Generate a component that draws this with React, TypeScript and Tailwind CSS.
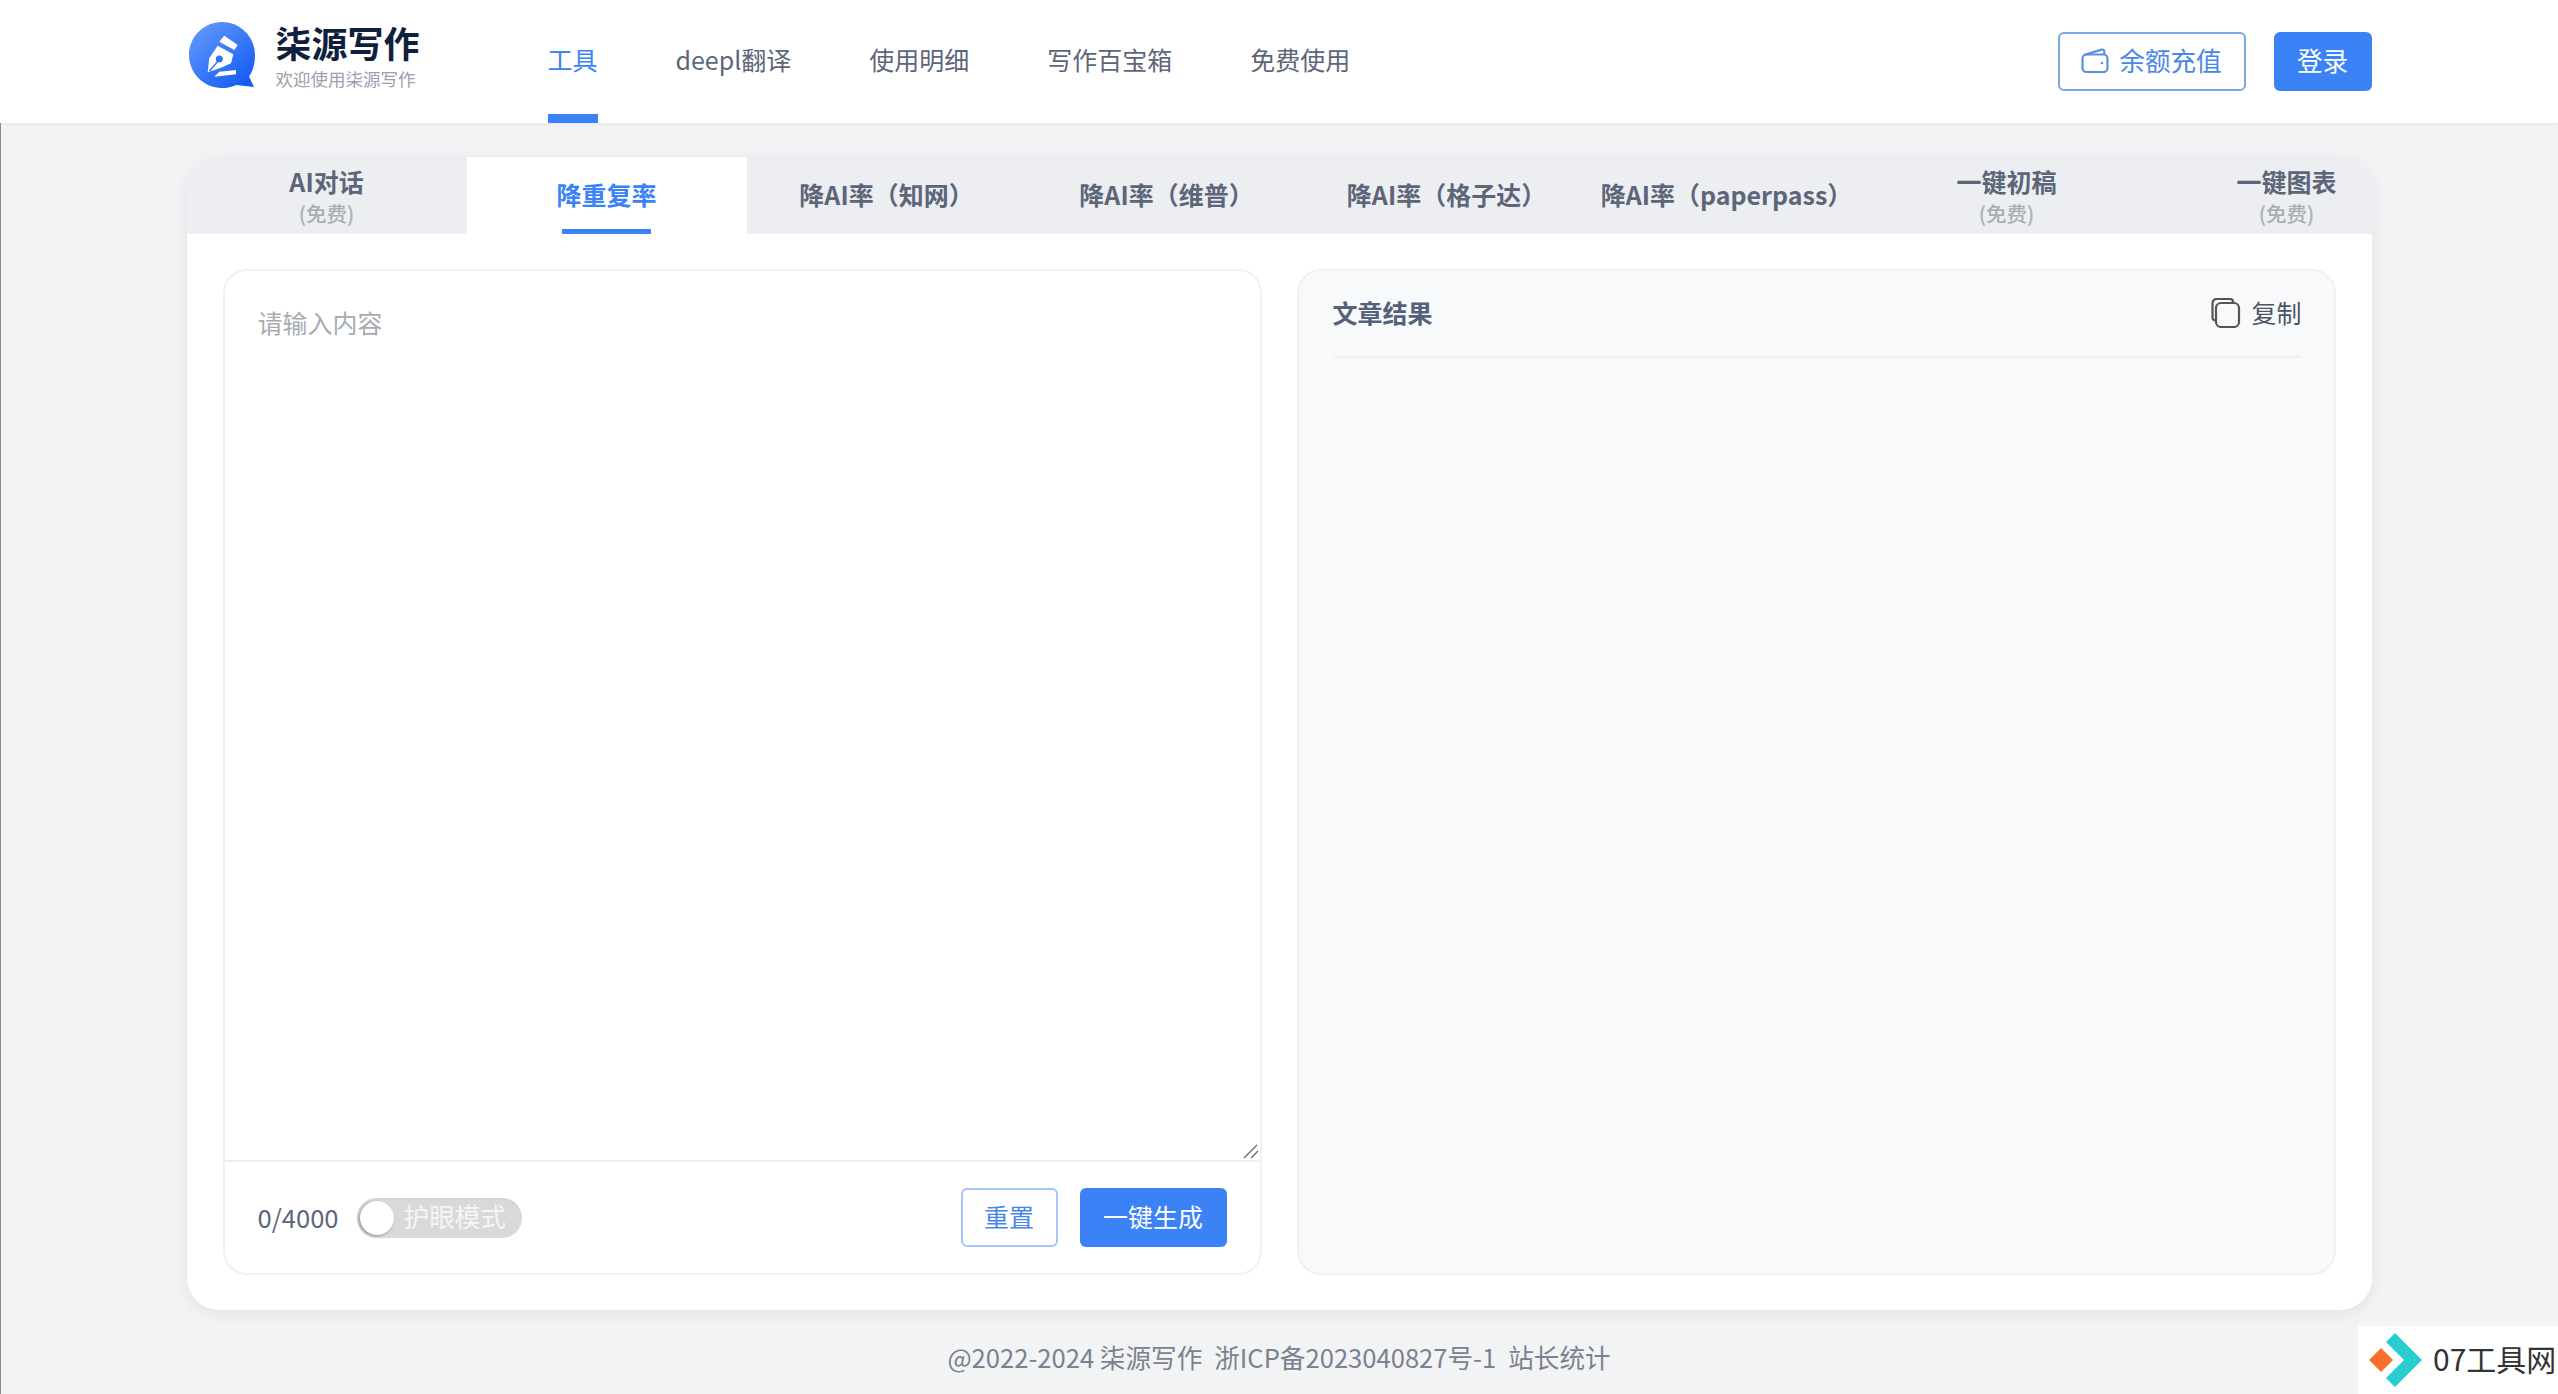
import React from "react";

const font = "font-['Noto_Sans_CJK_SC','Noto_Sans',sans-serif]";

const navItems = ["工具", "deepl翻译", "使用明细", "写作百宝箱", "免费使用"];

const tabs = [
  { label: "AI对话", sub: "(免费)" },
  { label: "降重复率", active: true },
  { label: "降AI率（知网）" },
  { label: "降AI率（维普）" },
  { label: "降AI率（格子达）" },
  { label: "降AI率（paperpass）" },
  { label: "一键初稿", sub: "(免费)" },
  { label: "一键图表", sub: "(免费)" },
];

const Logo = () => (
  <svg width="72" height="70" viewBox="0 0 72 70" className="shrink-0">
    <defs>
      <linearGradient id="logoFill" x1="0.1" y1="0.1" x2="0.85" y2="0.95">
        <stop offset="0" stopColor="#6197fb" />
        <stop offset="1" stopColor="#155cf3" />
      </linearGradient>
    </defs>
    <path
      d="M35 2C16.800 2 2 16.800 2 35s14.800 33 33 33c5 0 10-1.100 14.300-3.100L67 67l-5-10.500C66 51 68 43 68 35 68 16.800 53.200 2 35 2Z"
      fill="url(#logoFill)"
    />
    <path d="M37.300 15.700 50.700 25 47.300 30 32.300 21.700Z" fill="#fff" />
    <path d="M30.700 25.700 46.300 34.300 44 43.300 34 47.700 20.700 52.300 22.300 38.300Z" fill="#fff" />
    <circle cx="32.300" cy="39" r="3.500" fill="#2f72f6" />
    <path d="M32 40 22.500 51" stroke="#2f72f6" strokeWidth="1.400" />
    <path d="M32.300 51.700 49 50 49 54.300 27.300 56.700Z" fill="#fff" />
  </svg>
);

const Header = () => (
  <header className="relative h-[123px] shrink-0 bg-white shadow-[0_1px_4px_rgba(0,0,0,0.06)]">
    <div className="mx-auto flex h-full w-[2185px] items-center">
      <div className="flex w-[361px] items-center gap-[17px] pb-[13px]">
        <Logo />
        <div className="flex flex-col">
          <span className="text-[36px] leading-[44px] font-bold text-[#101f3c]">柒源写作</span>
          <span className="mt-1 text-[17.500px] leading-[22px] text-[#9aa0ad]">欢迎使用柒源写作</span>
        </div>
      </div>
      <nav className="flex h-full gap-[78px]">
        {navItems.map((item, i) => (
          <div
            key={item}
            className={`flex h-full items-center border-b-[9px] pt-[6px] text-[25px] ${
              i === 0 ? "border-[#3b82f6] text-[#3b82f6]" : "border-transparent text-[#5d6679]"
            }`}
          >
            {item}
          </div>
        ))}
      </nav>
      <div className="ml-auto flex items-center gap-7">
        <button className="flex h-[59px] w-[188px] items-center justify-center gap-[10px] rounded-md border-2 border-[#7ba6e4] bg-white pb-[2px] text-[25.600px] text-[#4a86e8]">
          <svg width="28" height="25" viewBox="0 0 28 25" fill="none" stroke="#5b8fe0" strokeWidth="2.200">
            <path d="M3 7 20.500 1.600c1.600-.4 2.800.5 2.800 2V7" strokeLinejoin="round" />
            <rect x="1.500" y="6.500" width="25" height="17.500" rx="4" />
            <circle cx="21" cy="15" r="1.300" fill="#5b8fe0" stroke="none" />
          </svg>
          余额充值
        </button>
        <button className="h-[59px] w-[98px] rounded-md bg-[#3b82f6] pb-[2px] text-[25.600px] text-white">登录</button>
      </div>
    </div>
  </header>
);

const TabBar = () => (
  <div className="flex h-[77px] overflow-hidden bg-[#eceef2]">
    {tabs.map((tab) => (
      <div
        key={tab.label}
        className={`flex w-[280px] shrink-0 flex-col items-center justify-center whitespace-nowrap ${
          tab.active ? "relative bg-white text-[#3b82f6]" : "text-[#5d6679]"
        } ${tab.sub ? "" : "pb-[3px]"}`}
      >
        <span className="text-[25px] leading-[34px] font-bold">{tab.label}</span>
        {tab.sub && <span className="text-[20.500px] leading-[30px] font-medium text-[#a9adb6]">{tab.sub}</span>}
        {tab.active && <span className="absolute bottom-0 h-[5px] w-[89px] bg-[#3b82f6]" />}
      </div>
    ))}
  </div>
);

const InputPanel = () => (
  <div className="flex h-[1006px] w-[1039px] flex-col overflow-hidden rounded-[24px] border-2 border-[#f0f1f3] bg-white">
    <div className="relative h-[891px] shrink-0">
      <textarea
        placeholder="请输入内容"
        className="h-full w-full resize-none border-b-2 border-[#eeeff2] px-[33px] py-[33px] text-[25px] leading-[36px] outline-none placeholder:text-[#a8abb2]"
      />
      <svg width="16" height="16" viewBox="0 0 16 16" className="absolute right-[1px] bottom-[3px]" stroke="#666" strokeWidth="1.300">
        <path d="M1 15 14 2M8 15 15 8" />
      </svg>
    </div>
    <div className="flex flex-1 items-center px-[33px]">
      <span className="text-[25.600px] text-[#5d6679]">0/4000</span>
      <div className="relative ml-[18px] flex h-[40px] w-[165px] items-center rounded-full bg-[#d9d9d9] pb-[2px] pl-[47px] text-[25.600px] whitespace-nowrap text-[#f5f5f5] shadow-[inset_0_1px_2px_rgba(0,0,0,0.05)]">
        <span className="absolute top-[3px] left-[3px] h-[34px] w-[34px] rounded-full bg-white shadow-[-1px_1px_3px_rgba(0,0,0,0.35)]" />
        护眼模式
      </div>
      <button className="ml-auto h-[59px] w-[97px] rounded-md border-2 border-[#a5c5f5] bg-white pb-[2px] text-[25px] text-[#4a86e8]">重置</button>
      <button className="ml-[22px] h-[59px] w-[147px] rounded-md bg-[#3b82f6] pb-[2px] text-[25px] text-white">一键生成</button>
    </div>
  </div>
);

const ResultPanel = () => (
  <div className="h-[1006px] w-[1039px] rounded-[24px] border-2 border-[#f0f1f3] bg-[#f8f9fb] px-[34px]">
    <div className="flex h-[87px] items-center justify-between border-b-2 border-[#eff0f3] pb-[2px]">
      <span className="text-[25px] font-bold text-[#55607a]">文章结果</span>
      <span className="-mr-[2px] flex items-center gap-[10px] text-[25px] text-[#4b5563]">
        <svg width="30" height="30" viewBox="0 0 30 30" fill="none" stroke="#555" strokeWidth="2.200">
          <path d="M4 22.500A3 3 0 0 1 1.500 19.500V5A4 4 0 0 1 5.500 1H19a3 3 0 0 1 3 3" />
          <rect x="5" y="5" width="23" height="24" rx="5" />
        </svg>
        复制
      </span>
    </div>
  </div>
);

export default function App() {
  return (
    <div className={`relative flex h-[1394px] flex-col overflow-hidden bg-[#f2f3f5] ${font}`}>
      <div className="absolute inset-y-0 left-0 w-px bg-[#8a8a8a]" />
      <Header />
      <main className="mx-auto mt-[34px] w-[2185px] shrink-0 overflow-hidden rounded-[32px] bg-white shadow-[0_4px_16px_rgba(0,0,0,0.07)]">
        <TabBar />
        <div className="flex justify-between px-[36px] py-[35px]">
          <InputPanel />
          <ResultPanel />
        </div>
      </main>
      <footer className="mt-[29px] flex justify-center gap-[12px] text-[25.600px] leading-[36px] text-[#7b8190]">
        <span>@2022-2024 柒源写作</span>
        <span>浙ICP备2023040827号-1</span>
        <span>站长统计</span>
      </footer>
      <div className="absolute right-0 bottom-0 flex h-[68px] w-[200px] items-center bg-white pl-[11px]">
        <svg width="66" height="56" viewBox="0 0 66 56" className="shrink-0">
          <path d="M0 28 12 16 24 28 12 40Z" fill="#fb6f2d" />
          <path d="M26 1 53 28 26 55 17 46 35 28 17 10Z" fill="#27cdcf" />
        </svg>
        <span className="-ml-[2px] pb-[3px] text-[30px] whitespace-nowrap text-[#333]">07工具网</span>
      </div>
    </div>
  );
}
